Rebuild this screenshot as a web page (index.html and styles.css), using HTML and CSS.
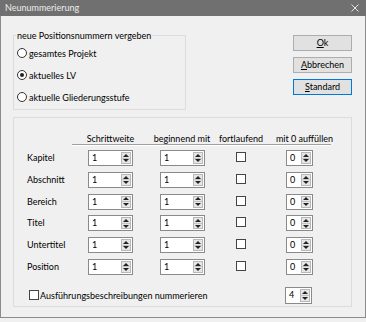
FILE: index.html
```html
<!DOCTYPE html>
<html>
<head>
<meta charset="utf-8">
<link rel="stylesheet" href="styles.css">
</head>
<body>
<div class="window">
  <div class="titlebar">
    <span class="title">Neunummerierung</span>
    <svg class="close" width="8" height="8" viewBox="0 0 8 8"><path d="M0.5 0.5L7.5 7.5M7.5 0.5L0.5 7.5" stroke="#e4e4e4" stroke-width="1"/></svg>
  </div>
  <div class="content">
    <div class="top">
      <fieldset class="group1">
        <legend>neue Positionsnummern vergeben</legend>
        <div class="radio-row"><span class="radio"></span>gesamtes Projekt</div>
        <div class="radio-row"><span class="radio checked"></span>aktuelles LV</div>
        <div class="radio-row"><span class="radio"></span>aktuelle Gliederungsstufe</div>
      </fieldset>
      <div class="buttons">
        <div class="btn"><u>O</u>k</div>
        <div class="btn"><u>A</u>bbrechen</div>
        <div class="btn default"><u>S</u>tandard</div>
      </div>
    </div>
    <div class="group2">
      <div class="grid">
        <div class="head c-a">Schrittweite</div>
        <div class="head c-b">beginnend mit</div>
        <div class="head c-c">fortlaufend</div>
        <div class="head c-d">mit 0 auffüllen</div>
        <div class="rule"></div>

        <div class="label">Kapitel</div>
        <div class="spin c-a"><span class="val">1</span><span class="spinner"><span class="up"></span><span class="down"></span></span></div>
        <div class="spin c-b"><span class="val">1</span><span class="spinner"><span class="up"></span><span class="down"></span></span></div>
        <div class="check c-c"></div>
        <div class="spin small c-e"><span class="val">0</span><span class="spinner"><span class="up"></span><span class="down"></span></span></div>

        <div class="label">Abschnitt</div>
        <div class="spin c-a"><span class="val">1</span><span class="spinner"><span class="up"></span><span class="down"></span></span></div>
        <div class="spin c-b"><span class="val">1</span><span class="spinner"><span class="up"></span><span class="down"></span></span></div>
        <div class="check c-c"></div>
        <div class="spin small c-e"><span class="val">0</span><span class="spinner"><span class="up"></span><span class="down"></span></span></div>

        <div class="label">Bereich</div>
        <div class="spin c-a"><span class="val">1</span><span class="spinner"><span class="up"></span><span class="down"></span></span></div>
        <div class="spin c-b"><span class="val">1</span><span class="spinner"><span class="up"></span><span class="down"></span></span></div>
        <div class="check c-c"></div>
        <div class="spin small c-e"><span class="val">0</span><span class="spinner"><span class="up"></span><span class="down"></span></span></div>

        <div class="label">Titel</div>
        <div class="spin c-a"><span class="val">1</span><span class="spinner"><span class="up"></span><span class="down"></span></span></div>
        <div class="spin c-b"><span class="val">1</span><span class="spinner"><span class="up"></span><span class="down"></span></span></div>
        <div class="check c-c"></div>
        <div class="spin small c-e"><span class="val">0</span><span class="spinner"><span class="up"></span><span class="down"></span></span></div>

        <div class="label">Untertitel</div>
        <div class="spin c-a"><span class="val">1</span><span class="spinner"><span class="up"></span><span class="down"></span></span></div>
        <div class="spin c-b"><span class="val">1</span><span class="spinner"><span class="up"></span><span class="down"></span></span></div>
        <div class="check c-c"></div>
        <div class="spin small c-e"><span class="val">0</span><span class="spinner"><span class="up"></span><span class="down"></span></span></div>

        <div class="label">Position</div>
        <div class="spin c-a"><span class="val">1</span><span class="spinner"><span class="up"></span><span class="down"></span></span></div>
        <div class="spin c-b"><span class="val">1</span><span class="spinner"><span class="up"></span><span class="down"></span></span></div>
        <div class="check c-c"></div>
        <div class="spin small c-e"><span class="val">0</span><span class="spinner"><span class="up"></span><span class="down"></span></span></div>
      </div>
      <div class="bottom-row">
        <span class="check"></span>
        <span class="bottom-label">Ausführungsbeschreibungen nummerieren</span>
        <div class="spin small tall"><span class="val">4</span><span class="spinner"><span class="up"></span><span class="down"></span></span></div>
      </div>
    </div>
  </div>
</div>
</body>
</html>
```

FILE: styles.css
```css
* { box-sizing: border-box; }
html, body { margin: 0; padding: 0; }
body {
  width: 366px;
  height: 322px;
  background: #f0f0f0;
  font-family: Lato, "Liberation Sans", sans-serif;
  font-size: 9px;
  color: #000;
  overflow: hidden;
}
.window {
  width: 366px;
  height: 318px;
  display: flex;
  flex-direction: column;
}
.titlebar {
  height: 16px;
  background: #707070;
  color: #ececec;
  display: flex;
  align-items: center;
  justify-content: space-between;
  padding: 0 7px 0 5px;
  flex: none;
}
.title { font-size: 9px; line-height: 16px; }
.close { display: block; }
.content {
  flex: 1;
  border: 1px solid #8c8c8c;
  border-top: none;
  padding: 14px 13px 0 12px;
}
.top {
  display: flex;
  justify-content: space-between;
  align-items: flex-start;
}
.group1 {
  margin: 0;
  width: 173px;
  min-width: 0;
  border: 1px solid #dcdcdc;
  padding: 1px 0 1px 3px;
}
.group1 legend {
  padding: 0 1px;
  margin-left: -1px;
  line-height: 11px;
}
.radio-row {
  height: 22px;
  display: flex;
  align-items: center;
}
.radio {
  width: 10px;
  height: 10px;
  border: 1px solid #333;
  border-radius: 50%;
  background: #fff;
  margin-right: 2px;
  display: flex;
  align-items: center;
  justify-content: center;
}
.radio.checked::after {
  content: "";
  width: 4px;
  height: 4px;
  border-radius: 50%;
  background: #222;
}
.buttons {
  display: flex;
  flex-direction: column;
  gap: 6px;
  margin-top: 5px;
}
.btn {
  width: 59px;
  height: 16px;
  background: #e1e1e1;
  border: 1px solid #adadad;
  text-align: center;
  line-height: 14px;
}
.btn.default { border-color: #0078d7; }
.group2 {
  margin-top: 7px;
  border: 1px solid #dcdcdc;
  padding-bottom: 2px;
}
.grid {
  display: grid;
  grid-template-columns: 45px 16px 45px 27px 44px 74px 8px 27px 18px;
  grid-template-rows: 10px 6px repeat(6, 21.8px);
  padding: 16px 0 0 13px;
}
.head {
  white-space: nowrap;
  justify-self: center;
  line-height: 10px;
  align-self: end;
}
.c-a { grid-column: 3; }
.c-b { grid-column: 5; }
.c-c { grid-column: 6; }
.c-d { grid-column: 7 / 10; }
.c-e { grid-column: 8; }
.rule {
  grid-column: 2 / 10;
  height: 2px;
  border-top: 1px solid #a0a0a0;
  border-bottom: 1px solid #fff;
  align-self: start;
}
.label {
  grid-column: 1 / 3;
  line-height: 16px;
  align-self: start;
}
.spin {
  width: 45px;
  height: 16px;
  border: 1px solid #8a8a8a;
  background: #fff;
  display: flex;
  padding: 1px;
  align-self: start;
}
.spin.small { width: 27px; }
.spin.tall { height: 17px; }
.val {
  flex: 1;
  padding-left: 2px;
  line-height: 12px;
}
.spinner {
  width: 10px;
  border: 1px solid #b8b8b8;
  background: #e6e6e6;
  display: flex;
  flex-direction: column;
}
.up, .down {
  flex: 1;
  display: flex;
  align-items: center;
  justify-content: center;
}
.down { border-top: 1px solid #c4c4c4; }
.up::before {
  content: "";
  border-left: 3px solid transparent;
  border-right: 3px solid transparent;
  border-bottom: 3px solid #222;
}
.down::before {
  content: "";
  border-left: 3px solid transparent;
  border-right: 3px solid transparent;
  border-top: 3px solid #222;
}
.check {
  width: 10px;
  height: 10px;
  border: 1px solid #444;
  background: #fff;
}
.grid .check {
  justify-self: center;
  align-self: start;
  margin-top: 2px;
}
.bottom-row {
  margin-top: 6px;
  height: 17px;
  display: flex;
  align-items: center;
  padding-left: 15px;
}
.bottom-row .check { margin-right: 1px; flex: none; }
.bottom-row .spin { margin-left: auto; margin-right: 39px; }
```
